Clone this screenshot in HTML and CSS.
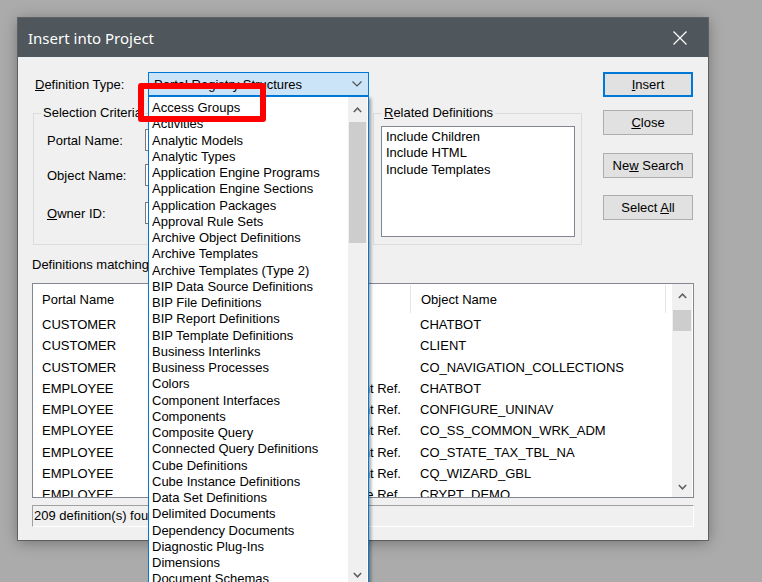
FILE: index.html
```html
<!DOCTYPE html>
<html>
<head>
<meta charset="utf-8">
<link rel="stylesheet" href="styles.css">
</head>
<body>
<div class="dialog">
  <div class="titlebar">
    <span class="title">Insert into Project</span>
    <svg class="close" width="14" height="14" viewBox="0 0 14 14"><path d="M0.5 0.5 L13.5 13.5 M13.5 0.5 L0.5 13.5" stroke="#fff" stroke-width="1.2" fill="none"/></svg>
  </div>
  <div class="content">
    <div class="top">
      <div class="left">
        <div class="defrow">
          <span class="deflbl"><u>D</u>efinition Type:</span>
          <div class="combo">
            <span>Portal Registry Structures</span>
            <svg class="chev" width="10" height="6" viewBox="0 0 10 6"><polyline points="0.5,0.5 5,5 9.5,0.5" fill="none" stroke="#505050" stroke-width="1.2"/></svg>
            <div class="droplist">
              <div class="items">
                <div>Access Groups</div>
                <div>Activities</div>
                <div>Analytic Models</div>
                <div>Analytic Types</div>
                <div>Application Engine Programs</div>
                <div>Application Engine Sections</div>
                <div>Application Packages</div>
                <div>Approval Rule Sets</div>
                <div>Archive Object Definitions</div>
                <div>Archive Templates</div>
                <div>Archive Templates (Type 2)</div>
                <div>BIP Data Source Definitions</div>
                <div>BIP File Definitions</div>
                <div>BIP Report Definitions</div>
                <div>BIP Template Definitions</div>
                <div>Business Interlinks</div>
                <div>Business Processes</div>
                <div>Colors</div>
                <div>Component Interfaces</div>
                <div>Components</div>
                <div>Composite Query</div>
                <div>Connected Query Definitions</div>
                <div>Cube Definitions</div>
                <div>Cube Instance Definitions</div>
                <div>Data Set Definitions</div>
                <div>Delimited Documents</div>
                <div>Dependency Documents</div>
                <div>Diagnostic Plug-Ins</div>
                <div>Dimensions</div>
                <div>Document Schemas</div>
              </div>
              <div class="dscroll">
                <div class="sbtn up-big"><svg width="9" height="6" viewBox="0 0 9 6"><polyline points="0.8,5 4.5,1.2 8.2,5" fill="none" stroke="#606060" stroke-width="1.6"/></svg></div>
                <div class="dthumb"></div>
                <div class="sfill"></div>
                <div class="sbtn down-big"><svg width="9" height="6" viewBox="0 0 9 6"><polyline points="0.8,1 4.5,4.8 8.2,1" fill="none" stroke="#606060" stroke-width="1.6"/></svg></div>
              </div>
            </div>
          </div>
        </div>
        <div class="groups">
          <fieldset class="sel">
            <legend>Selection Criteria</legend>
            <div class="frow r1"><span class="flbl">Portal Name:</span><span class="tb"></span></div>
            <div class="frow r2"><span class="flbl">Object Name:</span><span class="tb"></span></div>
            <div class="frow r3"><span class="flbl"><u>O</u>wner ID:</span><span class="tb"></span></div>
          </fieldset>
          <fieldset class="rel">
            <legend><u>R</u>elated Definitions</legend>
            <div class="listbox">
              <div>Include Children</div>
              <div>Include HTML</div>
              <div>Include Templates</div>
            </div>
          </fieldset>
        </div>
      </div>
      <div class="buttons">
        <div class="btn def"><span><u>I</u>nsert</span></div>
        <div class="btn b2"><span><u>C</u>lose</span></div>
        <div class="btn b3"><span>Ne<u>w</u> Search</span></div>
        <div class="btn b4"><span>Select <u>A</u>ll</span></div>
      </div>
    </div>
    <div class="matchlbl">Definitions matching selection criteria:</div>
    <div class="listview">
      <div class="lvmain">
        <div class="lvhead">
          <span class="h1">Portal Name</span>
          <span class="h2">Object Type</span>
          <span class="h3">Object Name</span>
          <span></span>
        </div>
        <div class="lvrow"><span>CUSTOMER</span><span class="c2"></span><span class="c3">CHATBOT</span></div>
        <div class="lvrow"><span>CUSTOMER</span><span class="c2"></span><span class="c3">CLIENT</span></div>
        <div class="lvrow"><span>CUSTOMER</span><span class="c2"></span><span class="c3">CO_NAVIGATION_COLLECTIONS</span></div>
        <div class="lvrow"><span>EMPLOYEE</span><span class="c2">Content Ref.</span><span class="c3">CHATBOT</span></div>
        <div class="lvrow"><span>EMPLOYEE</span><span class="c2">Content Ref.</span><span class="c3">CONFIGURE_UNINAV</span></div>
        <div class="lvrow"><span>EMPLOYEE</span><span class="c2">Content Ref.</span><span class="c3">CO_SS_COMMON_WRK_ADM</span></div>
        <div class="lvrow"><span>EMPLOYEE</span><span class="c2">Content Ref.</span><span class="c3">CO_STATE_TAX_TBL_NA</span></div>
        <div class="lvrow"><span>EMPLOYEE</span><span class="c2">Content Ref.</span><span class="c3">CQ_WIZARD_GBL</span></div>
        <div class="lvrow"><span>EMPLOYEE</span><span class="c2">Template Ref.</span><span class="c3">CRYPT_DEMO</span></div>
      </div>
      <div class="lvscroll">
        <div class="sbtn lv-up"><svg width="9" height="6" viewBox="0 0 9 6"><polyline points="0.8,5 4.5,1.2 8.2,5" fill="none" stroke="#606060" stroke-width="1.6"/></svg></div>
        <div class="lthumb"></div>
        <div class="sfill"></div>
        <div class="sbtn lv-down"><svg width="9" height="6" viewBox="0 0 9 6"><polyline points="0.8,1 4.5,4.8 8.2,1" fill="none" stroke="#606060" stroke-width="1.6"/></svg></div>
      </div>
    </div>
    <div class="status">209 definition(s) found.</div>
  </div>
</div>
<div class="annot"></div>
</body>
</html>
```
FILE: styles.css
```css
html, body {
  margin: 0;
  padding: 0;
}
body {
  width: 762px;
  height: 582px;
  overflow: hidden;
  position: relative;
  background: #ababab;
  font-family: "Liberation Sans", Arial, sans-serif;
  font-size: 13px;
  color: #000;
}
u { text-decoration: underline; text-underline-offset: 1px; }

.dialog {
  position: absolute;
  left: 18px;
  top: 18px;
  width: 690px;
  height: 522px;
  background: #f0f0f0;
  box-shadow: 0 0 0 1px rgba(70, 75, 80, 0.7), 0 2px 14px rgba(0, 0, 0, 0.35);
}

.titlebar {
  height: 39px;
  background: #4f565c;
  color: #fff;
  display: flex;
  align-items: center;
  padding-left: 10px;
  font-family: "Noto Sans", "Liberation Sans", sans-serif;
  font-size: 15px;
}
.close {
  margin-left: auto;
  margin-right: 21px;
}

.content {
  padding: 15px 14px 0 14px;
}

.top {
  display: flex;
  align-items: flex-start;
}
.left {
  width: 550px;
}

.defrow {
  display: flex;
  align-items: center;
  height: 24px;
}
.deflbl {
  width: 116px;
  padding-left: 3px;
  box-sizing: border-box;
}
.combo {
  position: relative;
  width: 221px;
  height: 24px;
  box-sizing: border-box;
  border: 1px solid #0078d7;
  background: #cce4f7;
  display: flex;
  align-items: center;
  padding-left: 5px;
  z-index: 5;
}
.chev {
  margin-left: auto;
  margin-right: 6px;
}

.droplist {
  position: absolute;
  left: -1px;
  top: 23px;
  width: 221px;
  height: 489px;
  box-sizing: border-box;
  border: 1px solid #0078d7;
  background: #fff;
  display: flex;
  box-shadow: 2px 2px 3px rgba(0, 0, 0, 0.35);
}
.items {
  flex: 1;
  padding: 3px 0 0 3px;
  overflow: hidden;
}
.items div {
  height: 16.25px;
  line-height: 16.25px;
  white-space: nowrap;
}
.dscroll {
  width: 19px;
  margin-right: 1px;
  background: #f0f0f0;
  display: flex;
  flex-direction: column;
}
.sbtn {
  display: flex;
  align-items: center;
  justify-content: center;
}
.up-big { height: 25px; }
.down-big { height: 19px; }
.dthumb {
  height: 121px;
  background: #cdcdcd;
  margin: 0 1px;
}
.sfill { flex: 1; }

.groups {
  display: flex;
  margin-top: 9px;
}
fieldset {
  margin: 0;
  border: 1px solid #dcdcdc;
  box-sizing: border-box;
  height: 140px;
  min-width: 0;
  padding: 0 0 0 7px;
}
legend {
  padding: 0 2px;
  line-height: 16px;
}
.sel {
  margin-left: 1px;
  width: 334px;
}
.rel {
  margin-left: 6px;
  width: 209px;
  padding-left: 8px;
}
.frow {
  display: flex;
  align-items: center;
  margin-left: 6px;
  height: 22px;
}
.r1 { margin-top: 8px; }
.r2 { margin-top: 13px; }
.r3 { margin-top: 16px; }
.flbl {
  width: 98px;
}
.tb {
  width: 210px;
  height: 22px;
  box-sizing: border-box;
  border: 1px solid #7a7a7a;
  background: #fff;
}
.listbox {
  margin-top: 5px;
  margin-left: -1px;
  width: 194px;
  height: 111px;
  box-sizing: border-box;
  border: 1px solid #828790;
  background: #fff;
  padding: 2px 0 0 4px;
}
.listbox div {
  line-height: 16.3px;
}

.buttons {
  margin-left: 21px;
  width: 90px;
  display: flex;
  flex-direction: column;
}
.btn {
  height: 25px;
  box-sizing: border-box;
  border: 1px solid #adadad;
  background: #e1e1e1;
  display: flex;
  align-items: center;
  justify-content: center;
}
.btn.def {
  border: 2px solid #0078d7;
}
.b2 { margin-top: 13px; }
.b3 { margin-top: 18px; }
.b4 { margin-top: 17px; }

.matchlbl {
  margin-top: 12px;
  line-height: 16px;
}

.listview {
  margin-top: 10px;
  height: 215px;
  box-sizing: border-box;
  border: 1px solid #828790;
  background: #fff;
  display: flex;
}
.lvmain {
  flex: 1;
  overflow: hidden;
}
.lvhead {
  display: grid;
  grid-template-columns: 168px 209px 256px 1fr;
  height: 30px;
}
.lvhead span {
  display: flex;
  align-items: center;
  margin: 1px 0 1px;
}
.h1 { padding-left: 9px; }
.h2 { padding-left: 10px; }
.h3 {
  padding-left: 10px;
  border-left: 1px solid #e5e5e5;
  border-right: 1px solid #e5e5e5;
}
.lvrow {
  display: grid;
  grid-template-columns: 168px 209px 1fr;
  height: 21.25px;
  line-height: 22px;
  white-space: nowrap;
}
.lvrow span:first-child { padding-left: 9px; }
.c2 {
  text-align: right;
  padding-right: 9px;
}
.c3 { padding-left: 10px; }

.lvscroll {
  width: 20px;
  margin-right: 1px;
  background: #f0f0f0;
  display: flex;
  flex-direction: column;
}
.lv-up { height: 24px; }
.lv-down { height: 20px; }
.lthumb {
  height: 21px;
  margin: 2px 1px 0;
  background: #cdcdcd;
}

.status {
  margin-top: 7px;
  height: 22px;
  box-sizing: border-box;
  border-top: 1px solid #a0a0a0;
  border-left: 1px solid #a0a0a0;
  border-right: 1px solid #fff;
  border-bottom: 1px solid #fff;
  padding-left: 1px;
  line-height: 20px;
  white-space: nowrap;
}

.annot {
  position: absolute;
  left: 138px;
  top: 83px;
  width: 128px;
  height: 39px;
  box-sizing: border-box;
  border: 6px solid #ff0000;
  border-radius: 3px;
  z-index: 10;
}
```
